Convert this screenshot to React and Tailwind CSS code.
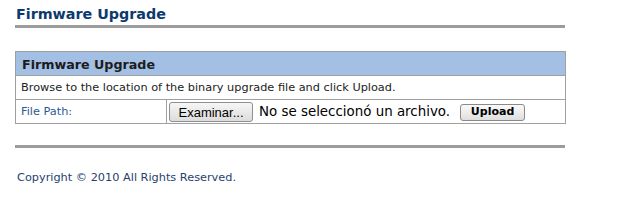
import React from 'react';

export default function App() {
  const font = { fontFamily: '"DejaVu Sans", Verdana, sans-serif' };
  return (
    <div className="bg-white w-[627px] h-[201px] pl-[15px] pt-[5px]" style={font}>
      <h1 className="text-[14.3px] font-bold text-[#0d3a6e] leading-[19px] pl-px">Firmware Upgrade</h1>
      <div className="w-[550px] h-[3px] bg-[#9c9c9c] mt-[1px]" />
      <table className="w-[551px] mt-[23px] border border-[#a0a0a0] border-collapse text-[11.3px] text-[#222]">
        <tbody>
          <tr>
            <td colSpan={2} className="bg-[#a3bfe3] h-[24px] px-[6px] pt-[2px] text-[12.7px] font-bold text-[#1c1c1c] border-b border-[#a0a0a0]">
              Firmware Upgrade
            </td>
          </tr>
          <tr>
            <td colSpan={2} className="h-[24px] px-[5px] pt-[2px] border-b border-[#a0a0a0]">
              Browse to the location of the binary upgrade file and click Upload.
            </td>
          </tr>
          <tr>
            <td className="w-[151px] h-[24px] px-[5px] pt-[2px] text-[#2a5a94] border-r border-[#a0a0a0]">File Path:</td>
            <td className="px-[2px] pt-[2px]">
              <div className="flex items-center">
                <span className="h-[20px] w-[84px] flex items-center justify-center border border-[#8f8f8f] rounded-[3px] bg-gradient-to-b from-[#f6f6f6] to-[#dcdcdc] text-[13px] text-black" style={{ fontFamily: '"Liberation Sans", Arial, sans-serif' }}>Examinar...</span>
                <span className="ml-[6px] text-[13.4px] text-black">No se seleccionó un archivo.</span>
                <span className="ml-[10px] h-[17px] w-[65px] flex items-center justify-center border border-[#8a8a8a] rounded-[3px] bg-gradient-to-b from-[#fafafa] to-[#dedede] text-[11px] font-bold text-black">Upload</span>
              </div>
            </td>
          </tr>
        </tbody>
      </table>
      <div className="w-[550px] h-[3px] bg-[#9c9c9c] mt-[21px]" />
      <p className="mt-[22px] pl-[2px] text-[11.3px] text-[#1f3f6f]">Copyright © 2010 All Rights Reserved.</p>
    </div>
  );
}
